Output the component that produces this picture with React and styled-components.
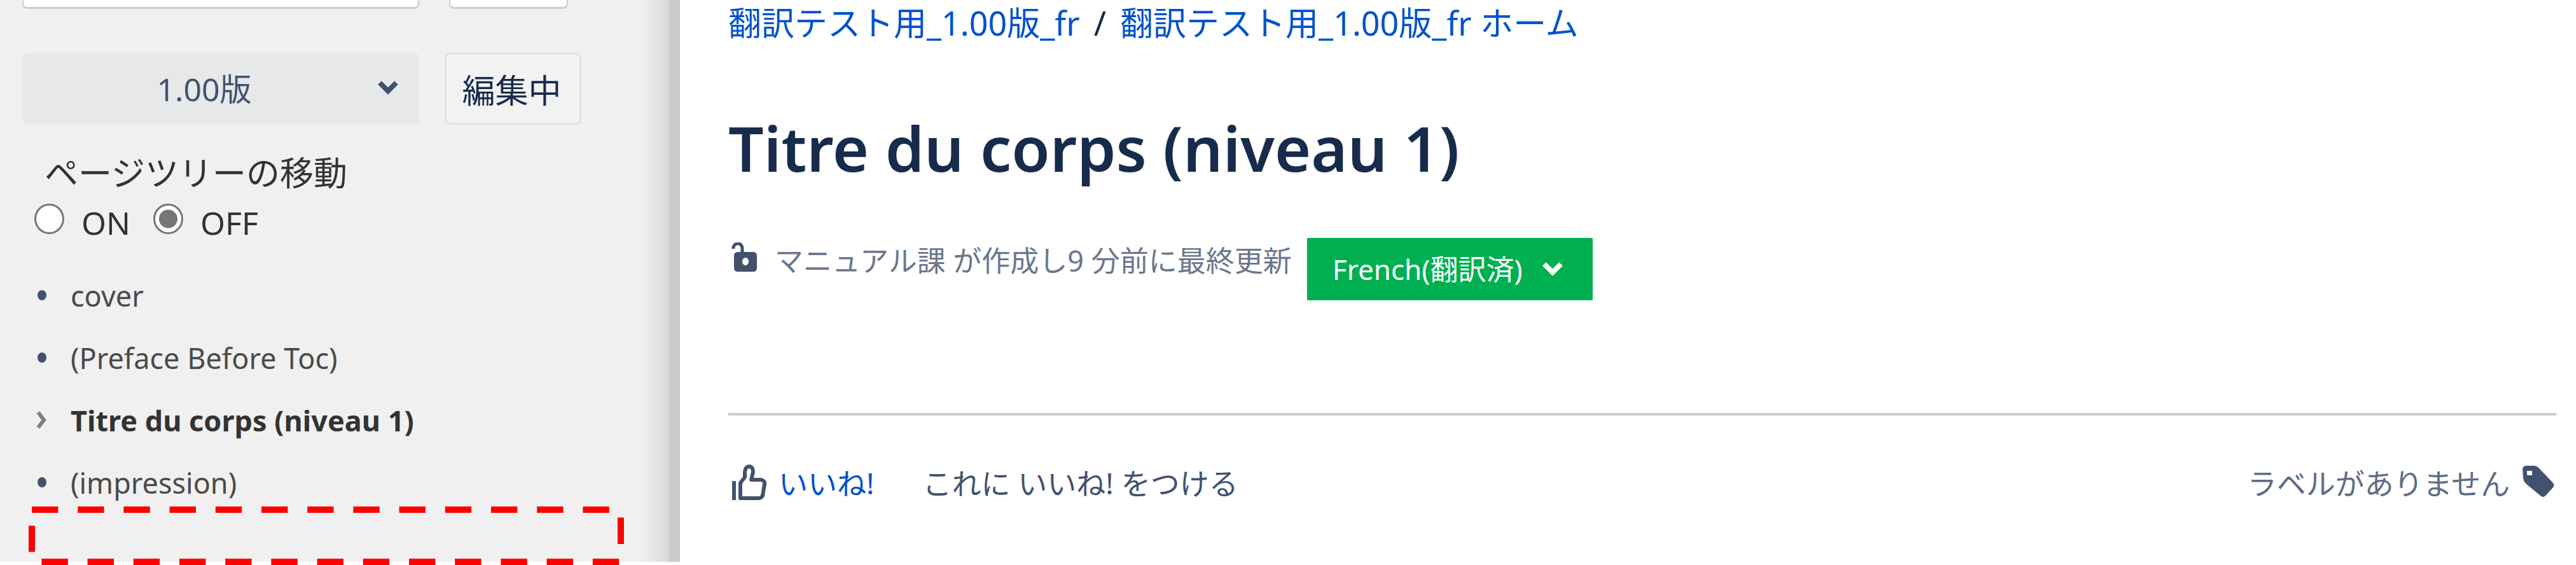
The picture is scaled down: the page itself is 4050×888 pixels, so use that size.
import { useState } from 'react'
import styled, { createGlobalStyle } from 'styled-components'

const GlobalStyle = createGlobalStyle`
  *, *::before, *::after { box-sizing: border-box; }

  body {
    margin: 0;
    background: #ffffff;
    color: #172b4d;
    font-family: "Noto Sans", "Noto Sans CJK JP", sans-serif;
  }

  button, input, select { font-family: inherit; margin: 0; }
`

const Page = styled.div`
  display: flex;
  align-items: flex-start;
  padding-bottom: 5px;
`

/* ── Sidebar ── */
const Sidebar = styled.aside`
  position: relative;
  flex: 0 0 1069px;
  padding: 0 100px 75px 35px;
  background: linear-gradient(to right, #f0f0f0 0, #f0f0f0 1008px, #d9d9d9 1052px, #cacaca 1052px);
`

const SearchRow = styled.div`
  display: flex;
  gap: 47px;
  margin-bottom: 69px;
`

const SearchInput = styled.input`
  width: 624px;
  height: 14px;
  padding: 0 12px;
  background: #ffffff;
  border: 2px solid #cccccc;
  border-top: 0;
  border-bottom-width: 3px;
  border-radius: 0 0 8px 8px;
`

const SearchButton = styled.button`
  width: 187px;
  height: 14px;
  padding: 0;
  background: #ffffff;
  border: 2px solid #cccccc;
  border-top: 0;
  border-bottom-width: 3px;
  border-radius: 0 0 8px 8px;
`

const VersionRow = styled.div`
  display: flex;
  gap: 40px;
  margin-bottom: 38px;
`

const SelectWrap = styled.div`
  position: relative;
  width: 624px;

  svg {
    position: absolute;
    right: 32px;
    top: 43px;
    pointer-events: none;
  }
`

const VersionSelect = styled.select`
  appearance: none;
  width: 100%;
  height: 113px;
  padding: 0 52px 0 0;
  border: 0;
  border-radius: 8px;
  background: #e6e8ea;
  color: #42526e;
  font-size: 50px;
  text-align: center;
  text-align-last: center;
`

const StatusButton = styled.button`
  width: 215px;
  height: 113px;
  padding: 0 4px 0 0;
  border: 3px solid #dfe1e6;
  border-radius: 8px;
  background: #f2f2f2;
  color: #172b4d;
  font-size: 52px;
`

const MoveGroup = styled.fieldset`
  margin: 0;
  padding: 0 0 0 19px;
  border: 0;
  color: #333333;
`

const MoveLegend = styled.legend`
  padding: 0 0 0 16px;
  font-size: 53px;
  line-height: 76px;
`

const RadioRow = styled.div`
  display: flex;
  gap: 36px;
`

const RadioLabel = styled.label`
  display: flex;
  align-items: center;
  gap: 27px;
  font-size: 50px;
  line-height: 80px;
`

const Radio = styled.input`
  appearance: none;
  width: 47px;
  height: 48px;
  margin-bottom: 12px;
  border: 3px solid #767676;
  border-radius: 50%;
  background: #ffffff;

  &:checked {
    background: radial-gradient(circle, #767676 0 14px, #ffffff 15px);
  }
`

const Tree = styled.ul`
  list-style: none;
  margin: 26px 0 0;
  padding: 0 0 0 20px;
`

const TreeItem = styled.li`
  display: flex;
  align-items: center;
  gap: 36px;
  height: 98px;
`

const TreeLink = styled.a`
  color: ${({ $current }) => ($current ? '#333333' : '#4a4a4a')};
  font-size: 45px;
  font-weight: ${({ $current }) => ($current ? 700 : 400)};
  line-height: 64px;
  text-decoration: none;
`

/* ── Dashed highlight over the end of the tree ── */
const Highlight = styled.svg`
  position: absolute;
  left: 45px;
  bottom: -5px;
`

/* ── Main ── */
const Main = styled.main`
  flex: 1;
  min-width: 0;
  padding: 0 31px 0 76px;
`

const Breadcrumb = styled.nav`
  display: flex;
  gap: 22px;
  font-size: 52px;
  line-height: 72px;

  a { color: #0052cc; text-decoration: none; }
`

const Title = styled.h1`
  margin: 88px 0 0;
  color: #172b4d;
  font-size: 98px;
  font-weight: 600;
  line-height: 144px;
`

const Meta = styled.div`
  display: flex;
  align-items: flex-start;
  gap: 28px;
  margin-top: 70px;
  color: #6b778c;
  font-size: 45px;
  line-height: 72px;

  > svg { margin: 7px 0 0 5px; }
`

const MetaText = styled.span`
  margin-right: -4px;
`

const LanguageButton = styled.button`
  display: flex;
  align-items: center;
  gap: 30px;
  height: 98px;
  padding: 0 46px 0 40px;
  border: 0;
  background: #00b050;
  color: #ffffff;
  font-size: 44px;
  line-height: 64px;
`

const Footer = styled.footer`
  display: flex;
  align-items: center;
  margin-top: 177px;
  padding-top: 70px;
  border-top: 4px solid #cccccc;
  color: #42526e;
  font-size: 46px;
  line-height: 72px;
`

const LikeButton = styled.button`
  display: flex;
  align-items: center;
  gap: 18px;
  margin-right: 76px;
  padding: 0 0 0 5px;
  border: 0;
  background: none;
  color: #0052cc;
  font-size: 46px;
  line-height: 72px;
`

const Labels = styled.div`
  display: flex;
  align-items: center;
  gap: 20px;
  margin-left: auto;
  padding-right: 3px;
  color: #5e6c84;
`

const ChevronDown = ({ color }) => (
  <svg width="34" height="24" viewBox="0 0 34 24" fill="none">
    <path d="M4 4 L17 17 L30 4" stroke={color} strokeWidth="8" />
  </svg>
)

const Bullet = () => (
  <svg width="20" height="20" viewBox="0 0 20 20">
    <ellipse cx="11" cy="9" rx="7" ry="8" fill="#42526e" />
  </svg>
)

const ChevronRight = () => (
  <svg width="20" height="30" viewBox="0 0 20 30" fill="none">
    <path d="M5 2 L14 14 L5 26" stroke="#808080" strokeWidth="6" />
  </svg>
)

const UnlockIcon = () => (
  <svg width="40" height="46" viewBox="0 0 40 46">
    <path d="M3 10 C2 0 17 -2 17 10 V17" fill="none" stroke="#42526e" strokeWidth="5" />
    <path
      d="M10 15 H34 Q40 15 40 21 V40 Q40 46 34 46 H10 Q4 46 4 40 V21 Q4 15 10 15 Z M22 24 a5 6 0 1 0 0.1 0 Z"
      fill="#42526e"
      fillRule="evenodd"
    />
  </svg>
)

const ThumbIcon = () => (
  <svg width="56" height="58" viewBox="0 0 56 58" fill="none" stroke="#42526e" strokeWidth="6">
    <path d="M4 26 V56" />
    <path d="M14 29 L21 20 V12 Q22 3 28 3 Q34 4 34 12 L31 24 H46 Q53 25 52 31 L49 49 Q47 53 43 53 H14 Z" strokeLinejoin="round" />
  </svg>
)

const TagIcon = () => (
  <svg width="50" height="54" viewBox="0 0 50 54">
    <path
      d="M6 0 H18 Q22 0 25 3 L47 26 Q51 30 48 34 L36 47 Q32 51 28 47 L5 28 Q2 25 1 20 L0 6 Q0 0 6 0 Z M7 8 V15 H15 V8 Z"
      fill="#42526e"
      fillRule="evenodd"
    />
  </svg>
)

const pages = [
  { title: 'cover' },
  { title: '(Preface Before Toc)' },
  { title: 'Titre du corps (niveau 1)', current: true },
  { title: '(impression)' },
]

const App = () => {
  const [move, setMove] = useState('OFF')

  return (
    <>
      <GlobalStyle />
      <Page>
        <Sidebar>
          <SearchRow>
            <SearchInput type="text" aria-label="検索" />
            <SearchButton type="button" aria-label="検索" />
          </SearchRow>

          <VersionRow>
            <SelectWrap>
              <VersionSelect aria-label="版" defaultValue="1.00版">
                <option>1.00版</option>
              </VersionSelect>
              <ChevronDown color="#42526e" />
            </SelectWrap>
            <StatusButton type="button">編集中</StatusButton>
          </VersionRow>

          <MoveGroup>
            <MoveLegend>ページツリーの移動</MoveLegend>
            <RadioRow>
              {['ON', 'OFF'].map((value) => (
                <RadioLabel key={value}>
                  <Radio
                    type="radio"
                    name="move"
                    value={value}
                    checked={move === value}
                    onChange={() => setMove(value)}
                  />
                  {value}
                </RadioLabel>
              ))}
            </RadioRow>
          </MoveGroup>

          <Tree>
            {pages.map(({ title, current }) => (
              <TreeItem key={title}>
                {current ? <ChevronRight /> : <Bullet />}
                <TreeLink href="#" $current={current}>{title}</TreeLink>
              </TreeItem>
            ))}
          </Tree>

          <Highlight width="936" height="92" viewBox="0 0 936 92" fill="none">
            <rect x="5" y="5" width="926" height="82" stroke="#ff0000" strokeWidth="10" strokeDasharray="41.4 30.8" />
          </Highlight>
        </Sidebar>

        <Main>
          <Breadcrumb>
            <a href="#">翻訳テスト用_1.00版_fr</a>
            <span>/</span>
            <a href="#">翻訳テスト用_1.00版_fr ホーム</a>
          </Breadcrumb>

          <Title>Titre du corps (niveau 1)</Title>

          <Meta>
            <UnlockIcon />
            <MetaText>マニュアル課 が作成し9 分前に最終更新</MetaText>
            <LanguageButton type="button">
              French(翻訳済)
              <ChevronDown color="#ffffff" />
            </LanguageButton>
          </Meta>

          <Footer>
            <LikeButton type="button">
              <ThumbIcon />
              いいね!
            </LikeButton>
            <span>これに いいね! をつける</span>
            <Labels>
              ラベルがありません
              <TagIcon />
            </Labels>
          </Footer>
        </Main>
      </Page>
    </>
  )
}

export default App
